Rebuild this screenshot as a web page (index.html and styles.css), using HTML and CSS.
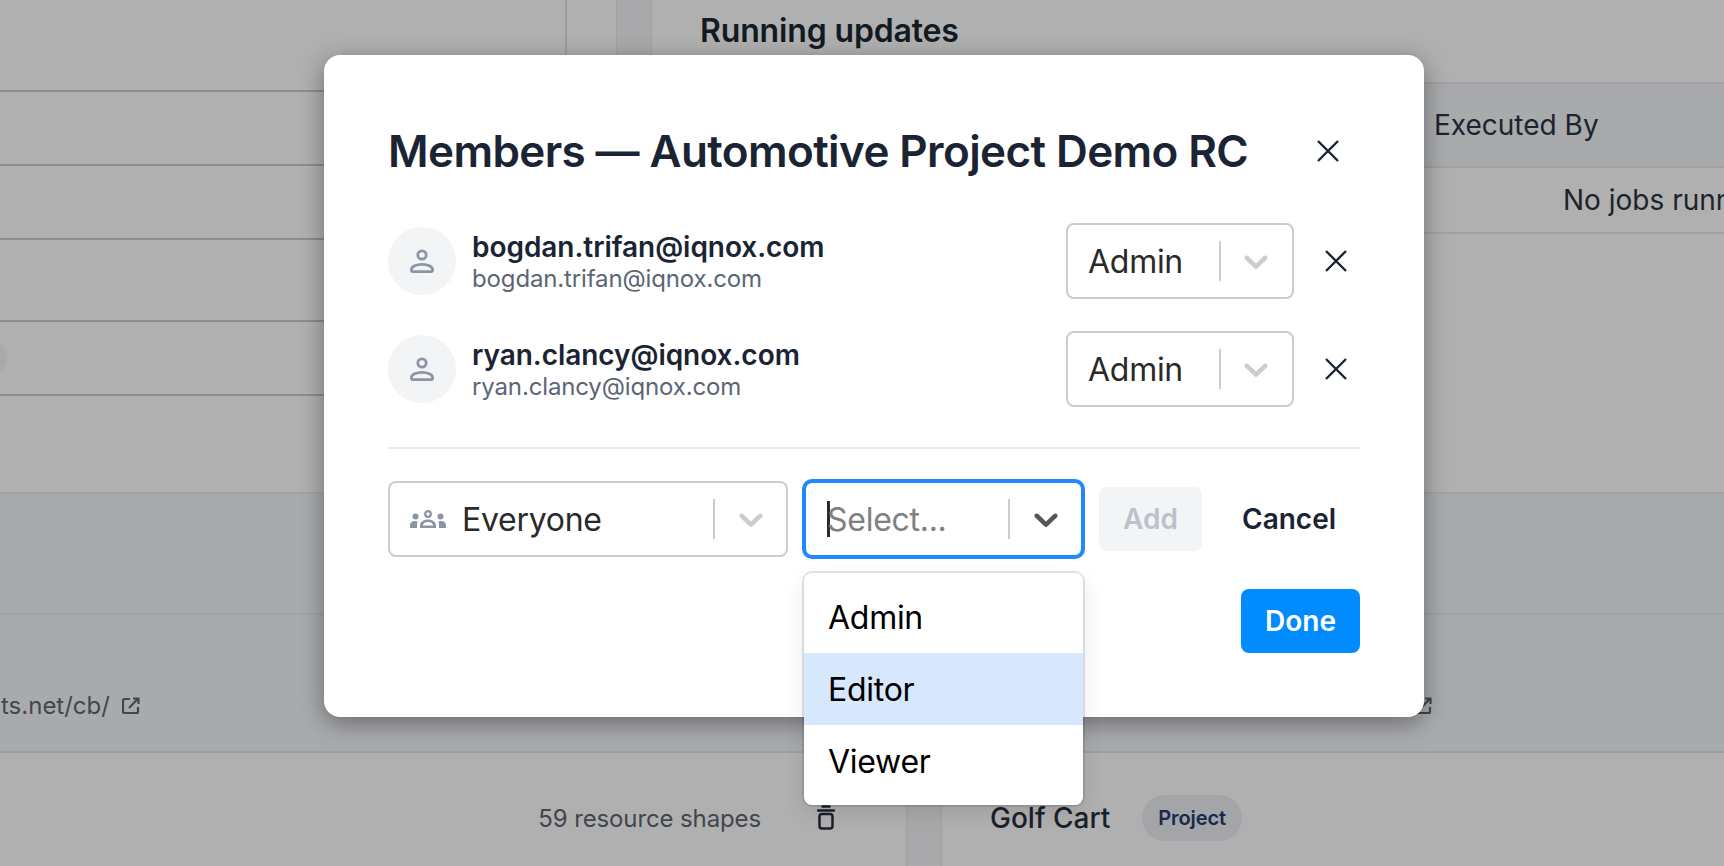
FILE: index.html
```html
<!DOCTYPE html>
<html lang="en">
<head>
<meta charset="utf-8">
<title>Members</title>
<link rel="stylesheet" href="styles.css">
</head>
<body>
<div class="page">
  <section class="top">
    <div class="left-panel">
      <div class="lrow r1"></div>
      <div class="lrow r2"></div>
      <div class="lrow r3"></div>
      <div class="lrow r4"><span class="stub-pill"></span></div>
      <div class="lrow r5"></div>
    </div>
    <div class="gutter"></div>
    <div class="band"></div>
    <div class="right-panel">
      <h2 class="updates-title">Running updates</h2>
      <div class="thead"><span class="th">Executed By</span></div>
      <div class="tempty"><span class="td">No jobs running</span></div>
    </div>
  </section>
  <section class="middle">
    <div class="mid-row"></div>
    <div class="link-row">
      <span class="link-text">ts.net/cb/</span>
      <svg class="ext" viewBox="0 0 18 18" fill="none" stroke="currentColor" stroke-width="2.2"><path d="M8 2H2.500A1.500 1.500 0 0 0 1 3.500v11A1.500 1.500 0 0 0 2.500 16h12a1.500 1.500 0 0 0 1.500-1.500V10M7 11l9-9.500M11 1.500h5.500V7"/></svg>
      <span class="spacer"></span>
      <svg class="ext ext-r" viewBox="0 0 18 18" fill="none" stroke="currentColor" stroke-width="2.2"><path d="M8 2H2.500A1.500 1.500 0 0 0 1 3.500v11A1.500 1.500 0 0 0 2.500 16h12a1.500 1.500 0 0 0 1.500-1.500V10M7 11l9-9.500M11 1.500h5.500V7"/></svg>
      <span class="tick tick-a"></span>
      <span class="tick tick-b"></span>
    </div>
  </section>
  <section class="bottom">
    <div class="cell-left">
      <span class="shapes">59 resource shapes</span>
      <svg class="trash" viewBox="0 0 18 25" fill="none" stroke="currentColor" stroke-width="2.500" stroke-linecap="round"><path d="M5.500 1.500h7M1 5.500h16"/><rect x="2.500" y="9" width="13" height="14.500" rx="2.500"/></svg>
    </div>
    <div class="band"></div>
    <div class="cell-right">
      <span class="golf">Golf Cart</span>
      <span class="badge">Project</span>
    </div>
  </section>

  <div class="modal">
    <header class="modal-head">
      <h1 class="modal-title">Members — Automotive Project Demo RC</h1>
      <svg class="x x-head" viewBox="0 0 22 22" fill="none" stroke="currentColor" stroke-width="2.400"><path d="M1 1l20 20M21 1L1 21"/></svg>
    </header>
    <div class="members">
      <div class="member">
        <span class="avatar">
          <svg class="person" viewBox="0 0 24 24" fill="none" stroke="currentColor" stroke-width="2.800"><circle cx="12" cy="6" r="4.200"/><path d="M12 15.300c-5.500 0-10.600 2.200-10.600 5.300v.4c0 1 .7 1.600 1.700 1.600h17.800c1 0 1.700-.6 1.700-1.600v-.4c0-3.100-5.100-5.300-10.600-5.300z"/></svg>
        </span>
        <div class="who">
          <div class="name">bogdan.trifan@iqnox.com</div>
          <div class="mail">bogdan.trifan@iqnox.com</div>
        </div>
        <div class="select role">
          <span class="value">Admin</span>
          <span class="sep"></span>
          <svg class="chev" viewBox="0 0 20 20" fill="currentColor"><path d="M4.516 7.548c.436-.446 1.043-.481 1.576 0L10 11.295l3.908-3.747c.533-.481 1.141-.446 1.574 0 .436.445.408 1.197 0 1.615-.406.418-4.695 4.502-4.695 4.502a1.095 1.095 0 0 1-1.576 0S4.924 9.581 4.516 9.163s-.436-1.170 0-1.615z"/></svg>
        </div>
        <svg class="x x-row" viewBox="0 0 22 22" fill="none" stroke="currentColor" stroke-width="2.400"><path d="M1 1l20 20M21 1L1 21"/></svg>
      </div>
      <div class="member">
        <span class="avatar">
          <svg class="person" viewBox="0 0 24 24" fill="none" stroke="currentColor" stroke-width="2.800"><circle cx="12" cy="6" r="4.200"/><path d="M12 15.300c-5.500 0-10.600 2.200-10.600 5.300v.4c0 1 .7 1.600 1.700 1.600h17.800c1 0 1.700-.6 1.700-1.600v-.4c0-3.100-5.100-5.300-10.600-5.300z"/></svg>
        </span>
        <div class="who">
          <div class="name">ryan.clancy@iqnox.com</div>
          <div class="mail">ryan.clancy@iqnox.com</div>
        </div>
        <div class="select role">
          <span class="value">Admin</span>
          <span class="sep"></span>
          <svg class="chev" viewBox="0 0 20 20" fill="currentColor"><path d="M4.516 7.548c.436-.446 1.043-.481 1.576 0L10 11.295l3.908-3.747c.533-.481 1.141-.446 1.574 0 .436.445.408 1.197 0 1.615-.406.418-4.695 4.502-4.695 4.502a1.095 1.095 0 0 1-1.576 0S4.924 9.581 4.516 9.163s-.436-1.170 0-1.615z"/></svg>
        </div>
        <svg class="x x-row" viewBox="0 0 22 22" fill="none" stroke="currentColor" stroke-width="2.400"><path d="M1 1l20 20M21 1L1 21"/></svg>
      </div>
    </div>
    <div class="rule"></div>
    <div class="add-row">
      <div class="select who-select">
        <svg class="group" viewBox="0 0 36 18" fill="currentColor"><circle cx="18" cy="4" r="2.800" fill="none" stroke="currentColor" stroke-width="2.200"/><circle cx="5.500" cy="6.500" r="3"/><circle cx="30.500" cy="6.500" r="3"/><path d="M18 9.500c-4.500 0-8 2.500-8 6v2.500h16v-2.500c0-3.500-3.500-6-8-6zm0 2.600c2.500 0 4.900 1.200 5.200 3.300H12.800c.3-2.100 2.700-3.300 5.200-3.300z"/><path d="M0 18v-3c0-2.500 2.500-4 5-4 1 0 2 .2 2.800.6C7.300 12.800 7 14 7 15.500V18zM36 18v-3c0-2.500-2.500-4-5-4-1 0-2 .2-2.800.6.500 1.200.8 2.400.8 3.900V18z"/></svg>
        <span class="value">Everyone</span>
        <span class="sep"></span>
        <svg class="chev" viewBox="0 0 20 20" fill="currentColor"><path d="M4.516 7.548c.436-.446 1.043-.481 1.576 0L10 11.295l3.908-3.747c.533-.481 1.141-.446 1.574 0 .436.445.408 1.197 0 1.615-.406.418-4.695 4.502-4.695 4.502a1.095 1.095 0 0 1-1.576 0S4.924 9.581 4.516 9.163s-.436-1.170 0-1.615z"/></svg>
      </div>
      <div class="select focused">
        <span class="caret"></span>
        <span class="placeholder">Select...</span>
        <span class="sep"></span>
        <svg class="chev" viewBox="0 0 20 20" fill="currentColor"><path d="M4.516 7.548c.436-.446 1.043-.481 1.576 0L10 11.295l3.908-3.747c.533-.481 1.141-.446 1.574 0 .436.445.408 1.197 0 1.615-.406.418-4.695 4.502-4.695 4.502a1.095 1.095 0 0 1-1.576 0S4.924 9.581 4.516 9.163s-.436-1.170 0-1.615z"/></svg>
        <div class="menu">
          <div class="option">Admin</div>
          <div class="option active">Editor</div>
          <div class="option">Viewer</div>
        </div>
      </div>
      <button class="btn btn-add" type="button">Add</button>
      <button class="btn btn-cancel" type="button">Cancel</button>
    </div>
    <div class="foot">
      <button class="btn btn-done" type="button">Done</button>
    </div>
  </div>
</div>
</body>
</html>
```
FILE: styles.css
```css
* { box-sizing: border-box; }
html, body { margin: 0; padding: 0; height: 100%; }
body { overflow: hidden; font-family: Inter, "Noto Sans", sans-serif; background: #b0b0b0; }
.page { position: relative; width: 1724px; height: 866px; overflow: hidden; display: flex; flex-direction: column; background: #b0b0b0; }

/* dimmed background */
.top { height: 492px; display: flex; flex: none; }
.left-panel { width: 567px; flex: none; border-right: 2px solid #9a9c9f; padding-top: 90px; }
.lrow { border-top: 2px solid #8c8c8c; }
.r1 { height: 74px; }
.r2 { height: 74px; }
.r3 { height: 82px; }
.r4 { height: 74px; display: flex; align-items: center; overflow: hidden; }
.r5 { height: 78px; }
.stub-pill { width: 32px; height: 32px; margin-left: -25px; border-radius: 16px; background: #a9aaac; }
.gutter { width: 49px; flex: none; }
.band { width: 36px; flex: none; background: #a9a9ab; border-left: 1px solid #a1a2a4; border-right: 1px solid #a1a2a4; }
.right-panel { flex: 1; min-width: 0; display: flex; flex-direction: column; }
.updates-title { margin: 0; height: 82px; padding: 11px 0 0 48px; font-size: 32px; line-height: 39px; font-weight: 600; letter-spacing: -0.15px; color: #141a22; }
.thead { height: 86px; background: #a9aaac; border-top: 2px solid #9fa1a4; border-bottom: 2px solid #9fa1a4; display: flex; align-items: center; padding: 0 0 0 782px; }
.th { font-size: 28px; line-height: 34px; color: #1d232c; white-space: nowrap; }
.tempty { height: 66px; border-bottom: 2px solid #9fa1a4; display: flex; align-items: center; padding: 0 0 1px 911px; overflow: hidden; }
.td { font-size: 28px; line-height: 34px; color: #1d232c; white-space: nowrap; }

.middle { height: 261px; flex: none; background: #a9aaac; border-top: 2px solid #a3a4a6; display: flex; flex-direction: column; }
.mid-row { height: 121px; flex: none; border-bottom: 2px solid #a0a2a4; }
.link-row { position: relative; flex: 1; border-bottom: 2px solid #9b9fa4; display: flex; align-items: center; padding-top: 46px; color: #41474f; }
.link-text { font-size: 24px; line-height: 30px; margin-left: 1px; }
.ext { width: 18px; height: 18px; margin-left: 12px; flex: none; color: #41474f; }
.spacer { flex: 1; }
.ext-r { margin-right: 292px; }
.tick { position: absolute; top: 100px; width: 2px; height: 2px; background: #41474f; }
.tick-a { left: 1142px; }
.tick-b { left: 1208px; }

.bottom { flex: 1; display: flex; min-height: 0; }
.cell-left { width: 906px; flex: none; display: flex; align-items: center; justify-content: flex-end; padding: 16px 71px 0 0; }
.shapes { font-size: 24px; line-height: 30px; letter-spacing: -0.12px; color: #40464f; padding-top: 2px; }
.trash { width: 18px; height: 25px; margin-left: 56px; color: #1a2029; }
.cell-right { flex: 1; display: flex; align-items: center; padding: 16px 0 0 48px; gap: 32px; }
.golf { font-size: 28px; line-height: 34px; color: #1a212b; font-weight: 500; padding-top: 1px; }
.badge { height: 46px; padding: 0 16px; border-radius: 23px; background: #a3a5a8; display: flex; align-items: center; font-size: 20px; font-weight: 600; letter-spacing: -0.1px; color: #17294a; }

/* modal */
.modal { position: absolute; left: 324px; top: 55px; width: 1100px; height: 662px; background: #fff; border-radius: 16px; box-shadow: 0 6px 24px rgba(0,0,0,.38); padding: 0 64px; }
.modal-head { height: 192px; display: flex; align-items: center; justify-content: space-between; padding: 0 21px 0 0; margin-bottom: -24px; }
.modal-title { margin: 0; font-size: 44px; line-height: 54px; font-weight: 600; letter-spacing: -0.6px; color: #1a2433; white-space: nowrap; }
.x { color: #1a2433; flex: none; }
.x-head { width: 22px; height: 22px; }
.x-row { width: 22px; height: 22px; margin-left: 31px; margin-right: 13px; }

.members { display: flex; flex-direction: column; gap: 32px; }
.member { height: 76px; display: flex; align-items: center; }
.avatar { width: 68px; height: 68px; border-radius: 50%; background: #f3f4f6; display: flex; align-items: center; justify-content: center; flex: none; color: #8b95a5; }
.person { width: 24px; height: 24px; }
.who { flex: 1; margin-left: 16px; min-width: 0; padding-top: 2px; }
.name { font-size: 28px; line-height: 32px; font-weight: 600; letter-spacing: -0.05px; color: #1a2433; }
.mail { font-size: 24px; line-height: 30px; letter-spacing: -0.14px; color: #5b6675; padding-top: 1px; }

.select { position: relative; height: 76px; border: 2px solid #ccc; border-radius: 8px; background: #fff; display: flex; align-items: center; flex: none; padding-left: 20px; }
.role { width: 228px; }
.value { flex: 1; font-size: 32px; line-height: 40px; letter-spacing: -0.27px; color: #2a2a2a; white-space: nowrap; padding-top: 2px; }
.sep { width: 2px; height: 40px; background: #ccc; flex: none; }
.chev { width: 40px; height: 40px; margin: 0 15px; color: #ccc; flex: none; }
.role .chev { margin-right: 16px; }
.who-select .chev { margin: 0 15px 0 16px; }

.rule { height: 2px; background: #e5e9ee; margin-top: 40px; }

.add-row { display: flex; align-items: center; margin-top: 32px; height: 76px; }
.who-select { width: 400px; }
.group { width: 36px; height: 18px; color: #8b95a5; margin-right: 16px; flex: none; }
.focused { width: 279px; margin-left: 16px; border-color: #2188ff; box-shadow: 0 0 0 2px #2188ff; padding-left: 21px; }
.focused .chev { color: #555; margin-left: 16px; }
.caret { width: 3px; height: 36px; background: #2a2a2a; flex: none; margin-right: -3px; }
.placeholder { flex: 1; font-size: 32px; line-height: 40px; letter-spacing: -0.27px; color: #808080; padding-top: 2px; }
.menu { position: absolute; left: -2px; right: -2px; top: 90px; padding: 8px 0; background: #fff; border-radius: 8px; box-shadow: 0 0 0 2px rgba(0,0,0,.1), 0 8px 22px rgba(0,0,0,.1); z-index: 2; }
.option { height: 72px; padding-left: 24px; display: flex; align-items: center; font-size: 32px; letter-spacing: -0.27px; color: #000; }
.active { background: #d7e8fc; }

.btn { border: 0; font-family: inherit; font-size: 28px; font-weight: 600; border-radius: 8px; height: 64px; padding: 0; cursor: pointer; }
.btn-add { width: 103px; margin-left: 16px; background: #f3f4f6; color: #bcc2cc; }
.btn-cancel { width: 93px; margin-left: 40px; background: none; color: #1a2433; }
.foot { display: flex; justify-content: flex-end; margin-top: 32px; }
.btn-done { width: 119px; background: #008cff; color: #fff; }
```
